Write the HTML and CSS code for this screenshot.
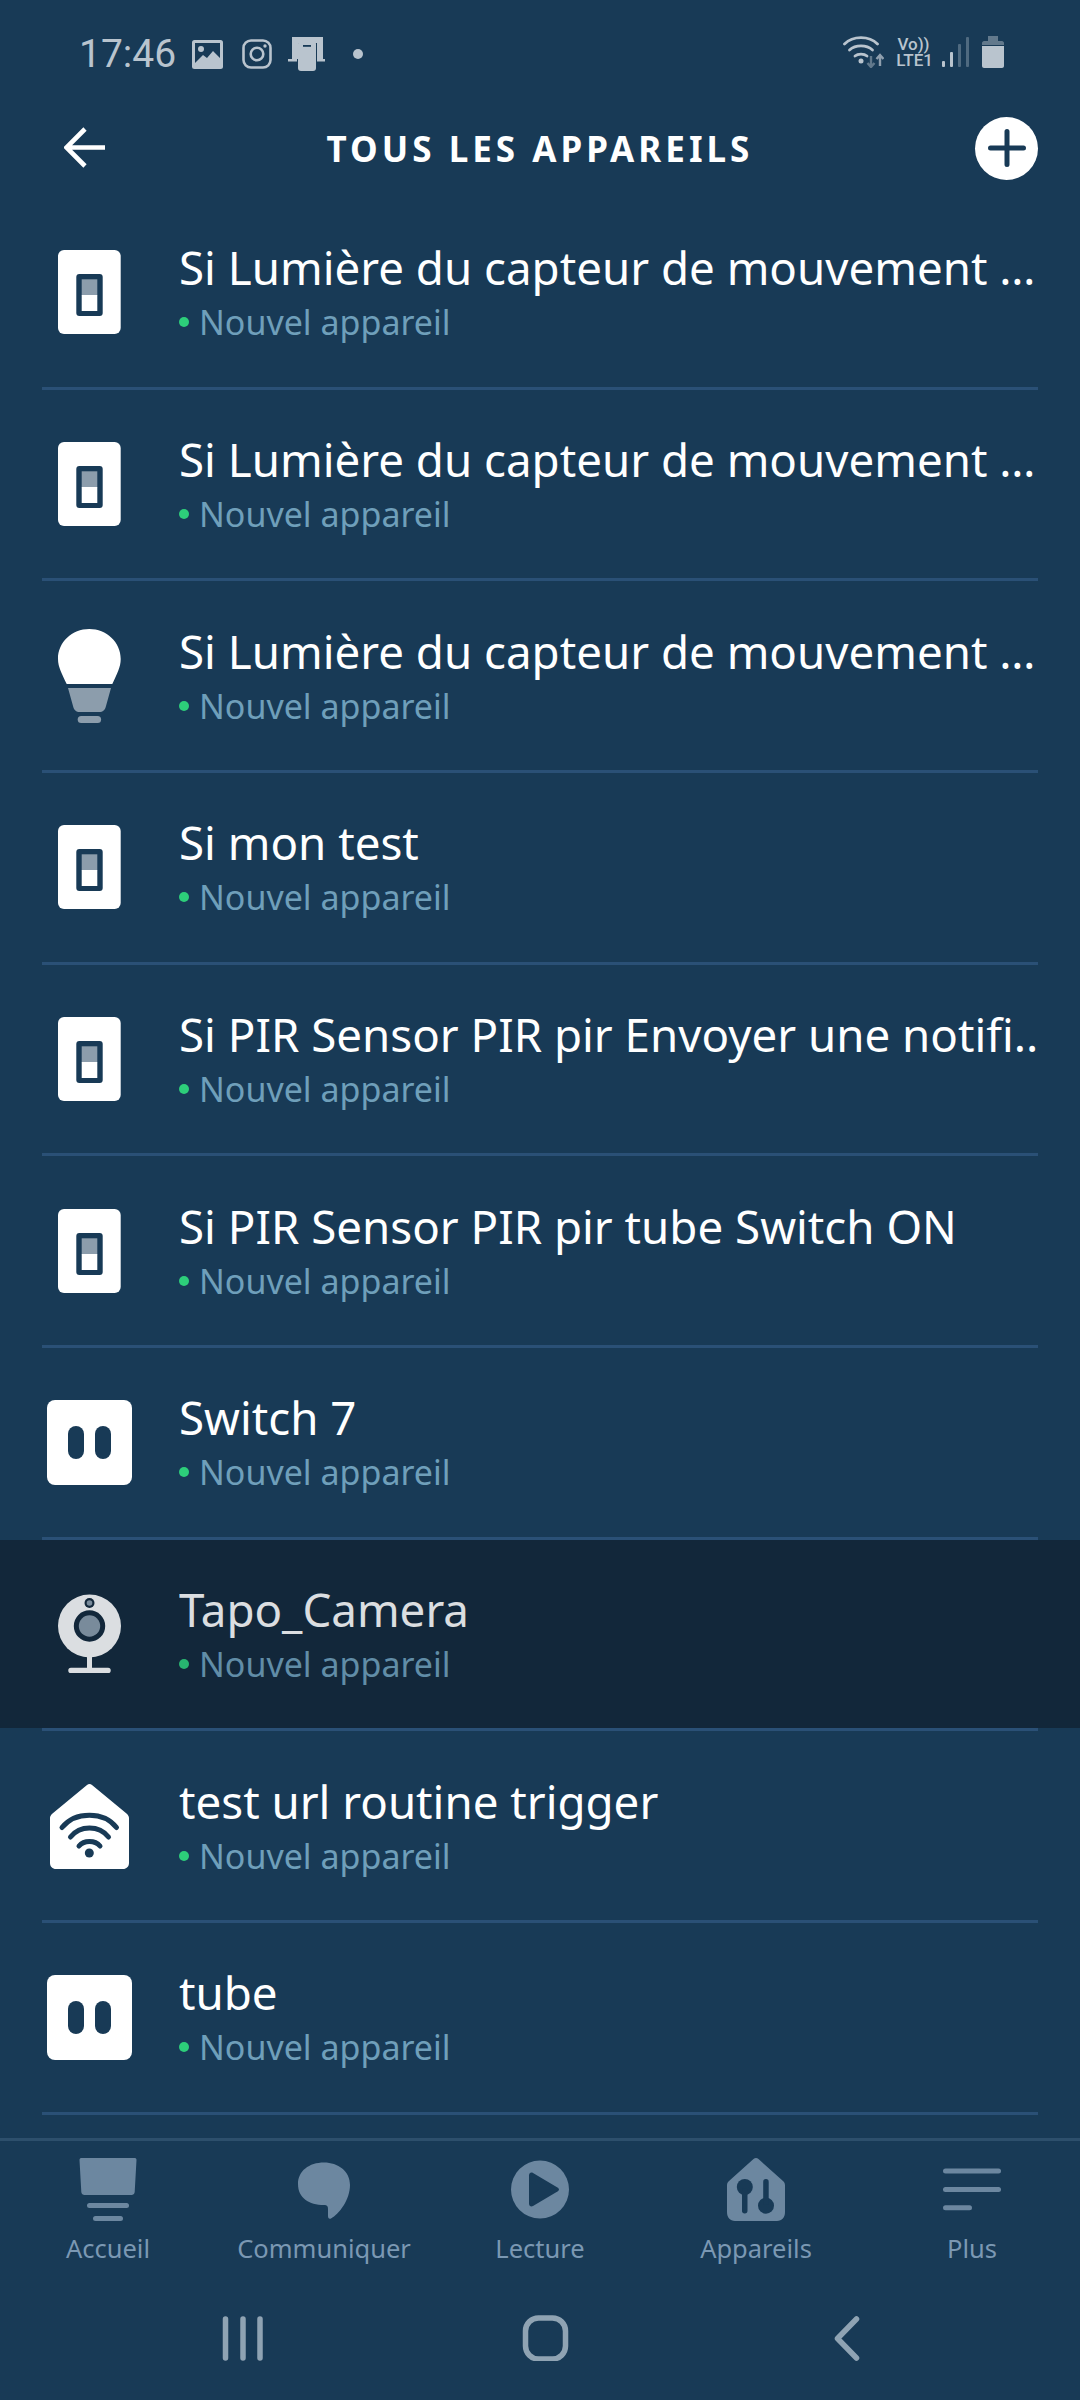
FILE: index.html
```html
<!DOCTYPE html>
<html lang="fr">
<head>
    <meta charset="UTF-8">
    <meta name="viewport" content="width=device-width, initial-scale=1.0">
    <title>Tous les appareils</title>
    <link rel="stylesheet" href="styles.css">
</head>
<body>
    <svg class="sprites" width="0" height="0">
        <symbol id="ic-switch" viewBox="0 0 94 94">
            <rect x="16" y="5" width="62.700" height="84" rx="6" fill="#fff"/>
            <rect x="34.300" y="29" width="26.400" height="42" rx="3" fill="#183a56"/>
            <rect x="39.700" y="34.300" width="15.600" height="16" fill="#8c9dac"/>
            <rect x="39.700" y="50" width="15.600" height="16" fill="#fff"/>
        </symbol>
        <symbol id="ic-bulb" viewBox="0 0 94 94">
            <path d="M47.300 0C64.500 0 78.700 13 78.700 30C78.700 38 75 45 70.300 55H24.700C20 45 16 38 16 30C16 13 30 0 47.300 0Z" fill="#fff"/>
            <path d="M26 59H69L64 77C63 81 61 83 57 83H38C34 83 32 81 31 77Z" fill="#8c9dac"/>
            <rect x="35.700" y="87" width="23.400" height="7" rx="3.500" fill="#8c9dac"/>
        </symbol>
        <symbol id="ic-plug" viewBox="0 0 94 94">
            <rect x="5" y="5" width="85" height="85" rx="8" fill="#fff"/>
            <rect x="26" y="31" width="16" height="33" rx="8" fill="#183a56"/>
            <rect x="53" y="31" width="16" height="33" rx="8" fill="#183a56"/>
        </symbol>
        <symbol id="ic-camera" viewBox="0 0 94 94">
            <circle cx="47.500" cy="39" r="31.500" fill="#fff"/>
            <rect x="45" y="68" width="5" height="14" fill="#fff"/>
            <rect x="26.300" y="80.700" width="42.400" height="5.300" rx="2.600" fill="#fff"/>
            <circle cx="47.500" cy="39" r="15.700" fill="#12273a"/>
            <circle cx="47.500" cy="39" r="10.700" fill="#8c9dac"/>
            <circle cx="47.500" cy="16" r="5" fill="#12273a"/>
            <circle cx="47.500" cy="16" r="2.800" fill="#8c9dac"/>
        </symbol>
        <symbol id="ic-wifi-home" viewBox="0 0 94 94">
            <path d="M45 6C46.500 4.700 48.500 4.700 50 6L84.500 34.500C86 35.800 87 37.500 87 39V84C87 87.500 84.500 90 81 90H14C10.500 90 8 87.500 8 84V39C8 37.500 9 35.800 10.500 34.500Z" fill="#fff"/>
            <g fill="none" stroke="#183a56" stroke-width="5" stroke-linecap="round">
                <path d="M20 48.500C33 32 62 32 74.500 48.500"/>
                <path d="M28.500 58C38 46 57 46 66.500 58"/>
                <path d="M37 67C42 61 53 61 58 67"/>
            </g>
            <circle cx="47.300" cy="74" r="4.500" fill="#183a56"/>
        </symbol>
    </svg>

    <div class="page">
        <div class="status-bar">
            <div class="status-left">
                <span class="time">17:46</span>
                <svg class="st-img" width="31" height="29" viewBox="0 0 31 29">
                    <rect width="31" height="29" rx="2.500" fill="#b9c4ce"/>
                    <rect x="3" y="3" width="25" height="20" fill="#183a56"/>
                    <circle cx="9" cy="9" r="3" fill="#b9c4ce"/>
                    <path d="M3 23L11 15L15 18L21 11L28 18V26H3Z" fill="#b9c4ce"/>
                </svg>
                <svg class="st-insta" width="30" height="30" viewBox="0 0 30 30">
                    <rect x="1.500" y="1.500" width="27" height="27" rx="7.500" fill="none" stroke="#b9c4ce" stroke-width="2.600"/>
                    <circle cx="15" cy="15" r="6.300" fill="none" stroke="#b9c4ce" stroke-width="2.600"/>
                    <circle cx="23" cy="7" r="1.700" fill="#b9c4ce"/>
                </svg>
                <svg class="st-dev" width="37" height="34" viewBox="0 0 37 34">
                    <path d="M4 0H35V22H29V6H10V22H4Z" fill="#b9c4ce"/>
                    <rect x="10" y="4" width="18" height="30" rx="3" fill="#b9c4ce"/>
                    <rect x="15" y="8" width="8" height="1.800" fill="#183a56"/>
                    <rect y="22" width="9" height="2.500" fill="#b9c4ce"/>
                    <rect x="29" y="22" width="8" height="2.500" fill="#b9c4ce"/>
                </svg>
                <span class="st-dot"></span>
            </div>
            <div class="status-right">
                <svg class="st-wifi" width="41" height="32" viewBox="0 0 41 32">
                    <g fill="none" stroke="#b9c4ce" stroke-width="2.800" stroke-linecap="round">
                        <path d="M1.500 8C10 -0.500 26 -0.500 34.500 8"/>
                        <path d="M6.500 14C12.500 8.500 23.500 8.500 29.500 14"/>
                        <path d="M12 20C15 17.500 21 17.500 24 20"/>
                    </g>
                    <circle cx="18" cy="25" r="2.500" fill="#b9c4ce"/>
                    <path d="M28 20V30M24.500 27L28 31L31.500 27" fill="none" stroke="#62798c" stroke-width="2.400"/>
                    <path d="M37 30V20M33.500 23L37 19L40.500 23" fill="none" stroke="#8f9fae" stroke-width="2.400"/>
                </svg>
                <span class="volte"><span>Vo))</span><span>LTE1</span></span>
                <div class="signal">
                    <span class="sig-bar sig-1"></span>
                    <span class="sig-bar sig-2"></span>
                    <span class="sig-bar sig-3"></span>
                    <span class="sig-bar sig-4"></span>
                </div>
                <svg class="st-batt" width="22" height="32" viewBox="0 0 22 32">
                    <path d="M6 0H16V5H20C21 5 22 6 22 7V9H0V7C0 6 1 5 2 5H6Z" fill="#62798c"/>
                    <path d="M0 10H22V30C22 31 21 32 20 32H2C1 32 0 31 0 30Z" fill="#b9c4ce"/>
                </svg>
            </div>
        </div>

        <header class="top-bar">
            <svg class="back-arrow" width="42" height="42" viewBox="0 0 42 42">
                <path d="M41 20.500H3M21 2L2.500 20.500L21 39" fill="none" stroke="#fff" stroke-width="4.600"/>
            </svg>
            <h1 class="page-title">TOUS LES APPAREILS</h1>
            <div class="add-btn">
                <svg width="38" height="38" viewBox="0 0 38 38">
                    <path d="M19 2.500V35.500M2.500 19H35.500" fill="none" stroke="#183a56" stroke-width="5" stroke-linecap="round"/>
                </svg>
            </div>
        </header>

        <div class="device-list">
            <div class="device">
                <div class="device-body">
                    <svg class="device-icon"><use href="#ic-switch"/></svg>
                    <div class="device-text">
                        <div class="device-name">Si Lumière du capteur de mouvement …</div>
                        <div class="device-sub"><span class="dot"></span>Nouvel appareil</div>
                    </div>
                </div>
                <div class="sep"></div>
            </div>
            <div class="device">
                <div class="device-body">
                    <svg class="device-icon"><use href="#ic-switch"/></svg>
                    <div class="device-text">
                        <div class="device-name">Si Lumière du capteur de mouvement …</div>
                        <div class="device-sub"><span class="dot"></span>Nouvel appareil</div>
                    </div>
                </div>
                <div class="sep"></div>
            </div>
            <div class="device">
                <div class="device-body">
                    <svg class="device-icon"><use href="#ic-bulb"/></svg>
                    <div class="device-text">
                        <div class="device-name">Si Lumière du capteur de mouvement …</div>
                        <div class="device-sub"><span class="dot"></span>Nouvel appareil</div>
                    </div>
                </div>
                <div class="sep"></div>
            </div>
            <div class="device">
                <div class="device-body">
                    <svg class="device-icon"><use href="#ic-switch"/></svg>
                    <div class="device-text">
                        <div class="device-name">Si mon test</div>
                        <div class="device-sub"><span class="dot"></span>Nouvel appareil</div>
                    </div>
                </div>
                <div class="sep"></div>
            </div>
            <div class="device">
                <div class="device-body">
                    <svg class="device-icon"><use href="#ic-switch"/></svg>
                    <div class="device-text">
                        <div class="device-name">Si PIR Sensor PIR pir Envoyer une notifi..</div>
                        <div class="device-sub"><span class="dot"></span>Nouvel appareil</div>
                    </div>
                </div>
                <div class="sep"></div>
            </div>
            <div class="device">
                <div class="device-body">
                    <svg class="device-icon"><use href="#ic-switch"/></svg>
                    <div class="device-text">
                        <div class="device-name">Si PIR Sensor PIR pir tube Switch ON</div>
                        <div class="device-sub"><span class="dot"></span>Nouvel appareil</div>
                    </div>
                </div>
                <div class="sep"></div>
            </div>
            <div class="device">
                <div class="device-body">
                    <svg class="device-icon"><use href="#ic-plug"/></svg>
                    <div class="device-text">
                        <div class="device-name">Switch 7</div>
                        <div class="device-sub"><span class="dot"></span>Nouvel appareil</div>
                    </div>
                </div>
                <div class="sep"></div>
            </div>
            <div class="device pressed">
                <div class="device-body">
                    <svg class="device-icon"><use href="#ic-camera"/></svg>
                    <div class="device-text">
                        <div class="device-name">Tapo_Camera</div>
                        <div class="device-sub"><span class="dot"></span>Nouvel appareil</div>
                    </div>
                </div>
                <div class="sep"></div>
            </div>
            <div class="device">
                <div class="device-body">
                    <svg class="device-icon"><use href="#ic-wifi-home"/></svg>
                    <div class="device-text">
                        <div class="device-name">test url routine trigger</div>
                        <div class="device-sub"><span class="dot"></span>Nouvel appareil</div>
                    </div>
                </div>
                <div class="sep"></div>
            </div>
            <div class="device">
                <div class="device-body">
                    <svg class="device-icon"><use href="#ic-plug"/></svg>
                    <div class="device-text">
                        <div class="device-name">tube</div>
                        <div class="device-sub"><span class="dot"></span>Nouvel appareil</div>
                    </div>
                </div>
                <div class="sep"></div>
            </div>
        </div>

        <nav class="tab-bar">
            <div class="tab">
                <svg width="64" height="64" viewBox="0 0 64 64">
                    <path d="M5 0H59C60 0 60.500 1 60.500 2L58.700 34C58.600 36 57 37 55.500 37H8.500C7 37 5.400 36 5.300 34L3.500 2C3.500 1 4 0 5 0Z" fill="#6c87a0"/>
                    <rect x="11" y="45" width="42" height="5" rx="2.500" fill="#6c87a0"/>
                    <rect x="17" y="58" width="30" height="5" rx="2.500" fill="#6c87a0"/>
                </svg>
                <span class="tab-label">Accueil</span>
            </div>
            <div class="tab">
                <svg width="64" height="64" viewBox="0 0 64 64">
                    <path d="M32 4.500C46 4.500 58 13 58 27C58 42 47 56 39 60.500C37 61.500 36 60 36 58V51C36 48 35 47 32 47C17 47 6 40 6 26C6 13 17 4.500 32 4.500Z" fill="#6c87a0"/>
                </svg>
                <span class="tab-label">Communiquer</span>
            </div>
            <div class="tab">
                <svg width="64" height="64" viewBox="0 0 64 64">
                    <circle cx="32" cy="31.500" r="29" fill="#6c87a0"/>
                    <path d="M21 17.500C21 15 23 14 25 15L49.500 29.500C51.500 30.700 51.500 32.300 49.500 33.500L25 48C23 49 21 48 21 45.500Z" fill="#183a56"/>
                </svg>
                <span class="tab-label">Lecture</span>
            </div>
            <div class="tab">
                <svg width="64" height="64" viewBox="0 0 64 64">
                    <path d="M29.500 1C31 -0.300 33 -0.300 34.500 1L59 23C60.500 24.300 61 25.500 61 27.500V54C61 59.500 58 63 53 63H11C6 63 3 59.500 3 54V27.500C3 25.500 3.500 24.300 5 23Z" fill="#6c87a0"/>
                    <circle cx="20.800" cy="29" r="8" fill="#183a56"/>
                    <rect x="18" y="30" width="5.500" height="25.500" rx="2.700" fill="#183a56"/>
                    <circle cx="42" cy="47.700" r="8" fill="#183a56"/>
                    <rect x="39.200" y="21" width="5.500" height="26" rx="2.700" fill="#183a56"/>
                </svg>
                <span class="tab-label">Appareils</span>
            </div>
            <div class="tab">
                <svg width="64" height="64" viewBox="0 0 64 64">
                    <rect x="3" y="10.500" width="58" height="5" rx="2.500" fill="#6c87a0"/>
                    <rect x="3" y="29" width="58" height="5" rx="2.500" fill="#6c87a0"/>
                    <rect x="3" y="47.200" width="29" height="5" rx="2.500" fill="#6c87a0"/>
                </svg>
                <span class="tab-label">Plus</span>
            </div>
        </nav>

        <div class="nav-bar">
            <svg width="64" height="46" viewBox="0 0 64 46">
                <g fill="none" stroke="#8fa3b3" stroke-width="5.500" stroke-linecap="round">
                    <path d="M14.500 4V43M32 4V43M49 4V43"/>
                </g>
            </svg>
            <svg width="64" height="46" viewBox="0 0 64 46">
                <rect x="12.500" y="3" width="40" height="41" rx="13" fill="none" stroke="#8fa3b3" stroke-width="5.500"/>
            </svg>
            <svg width="64" height="46" viewBox="0 0 64 46">
                <path d="M41.500 4L22.500 23.500L41.500 43" fill="none" stroke="#8fa3b3" stroke-width="5.500" stroke-linecap="round" stroke-linejoin="round"/>
            </svg>
        </div>
    </div>
</body>
</html>
```

FILE: styles.css
```css
* {
    box-sizing: border-box;
}

body {
    margin: 0;
    background: #183a56;
    font-family: "Noto Sans", "Open Sans", sans-serif;
    color: #fff;
}

.sprites {
    display: block;
}

.page {
    width: 1080px;
    height: 2400px;
    display: flex;
    flex-direction: column;
    overflow: hidden;
}

/* status bar */
.status-bar {
    height: 108px;
    flex: none;
    display: flex;
    justify-content: space-between;
    align-items: flex-start;
    padding: 36px 76px 0 79px;
}

.status-left,
.status-right {
    display: flex;
    align-items: center;
}

.time {
    font-family: Roboto, sans-serif;
    font-size: 39px;
    line-height: 36px;
    color: #b9c4ce;
    width: 113px;
}

.st-insta {
    margin-left: 19px;
}

.st-dev {
    margin-left: 16px;
}

.st-dot {
    width: 10px;
    height: 10px;
    border-radius: 50%;
    background: #b9c4ce;
    margin-left: 28px;
}

.volte {
    display: flex;
    flex-direction: column;
    align-items: flex-end;
    width: 39px;
    margin-left: 10px;
    font-family: Roboto, sans-serif;
    font-weight: 500;
    font-size: 17px;
    line-height: 16px;
    color: #b9c4ce;
}

.volte span:first-child {
    align-self: center;
}

.signal {
    display: flex;
    align-items: flex-end;
    gap: 5px;
    height: 30px;
    margin-left: 9px;
}

.sig-bar {
    width: 3px;
    border-radius: 1px;
}

.sig-1 {
    height: 6px;
    background: #b9c4ce;
}

.sig-2 {
    height: 15px;
    background: #b9c4ce;
}

.sig-3 {
    height: 23px;
    background: #4f6a80;
}

.sig-4 {
    height: 30px;
    background: #4f6a80;
}

.st-batt {
    margin-left: 13px;
}

/* top bar */
.top-bar {
    height: 80px;
    flex: none;
    display: grid;
    grid-template-columns: 1fr auto 1fr;
    align-items: center;
    padding: 0 42px;
}

.back-arrow {
    margin-left: 22px;
}

.page-title {
    margin: 0;
    padding-top: 2px;
    font-size: 35px;
    font-weight: 700;
    letter-spacing: 4px;
    line-height: 40px;
}

.add-btn {
    justify-self: end;
    width: 63px;
    height: 63px;
    border-radius: 50%;
    background: #fff;
    display: flex;
    align-items: center;
    justify-content: center;
}

/* device list */
.device-list {
    flex: 1;
    margin-top: 10px;
}

.device-body {
    height: 188.67px;
    display: flex;
    align-items: center;
    padding: 0 38px 0 42px;
}

.device-icon {
    width: 94px;
    height: 94px;
    flex: none;
}

.device-text {
    margin-left: 43px;
    min-width: 0;
    flex: 1;
    white-space: nowrap;
}

.device-name {
    font-size: 45.7px;
    line-height: 56px;
}

.device-sub {
    display: flex;
    align-items: center;
    font-size: 34px;
    line-height: 46px;
    margin-top: 4px;
    color: #6f9fba;
}

.dot {
    width: 10px;
    height: 10px;
    border-radius: 50%;
    background: #2dce7a;
    margin: 0 10px 0 0;
}

.sep {
    height: 3px;
    margin: 0 42px;
    background: #2a5076;
}

.pressed .device-body {
    background: #12273a;
}

.pressed .device-body > * {
    opacity: 0.85;
}

/* bottom tabs */
.tab-bar {
    height: 132px;
    flex: none;
    border-top: 3px solid #2d4f6c;
    display: grid;
    grid-template-columns: repeat(5, 1fr);
    padding-top: 17px;
}

.tab {
    display: flex;
    flex-direction: column;
    align-items: center;
}

.tab-label {
    font-size: 25.5px;
    line-height: 34px;
    margin-top: 9px;
    color: #7b98b3;
}

/* android nav */
.nav-bar {
    height: 130px;
    flex: none;
    display: flex;
    justify-content: space-between;
    padding: 45px 201px 0 211px;
    align-items: flex-start;
}
```
